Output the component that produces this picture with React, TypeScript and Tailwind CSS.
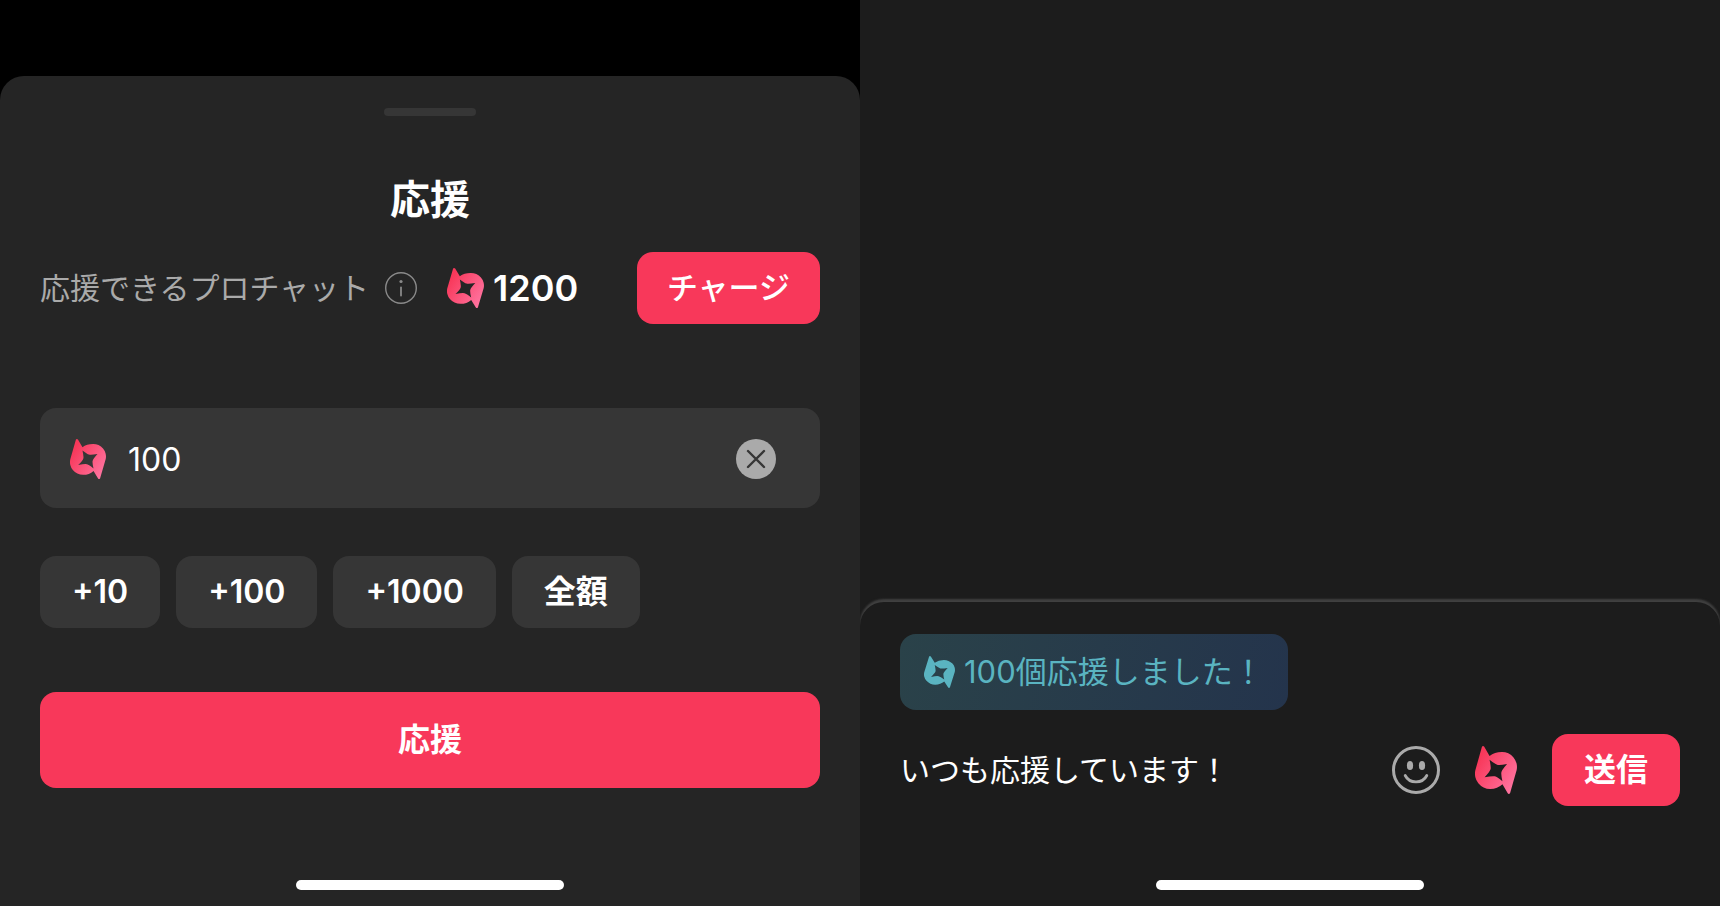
import { useId, useState } from "react";

const BALANCE = 1200;
const STEPS = [10, 100, 1000];

function CoinIcon({ className, flat = false }: { className: string; flat?: boolean }) {
  const id = useId();

  return (
    <svg viewBox="9 0 127 144" preserveAspectRatio="none" className={className} aria-hidden="true">
      <defs>
        <linearGradient id={id} x1="20" y1="40" x2="130" y2="112" gradientUnits="userSpaceOnUse">
          <stop stopColor="#f8385a" />
          <stop offset="1" stopColor="#ff729e" />
        </linearGradient>
      </defs>
      <path
        fill={flat ? "currentColor" : `url(#${id})`}
        fillRule="evenodd"
        d="M30 2Q33 -2 37 2L53 30Q68 18 90 18A45 45 0 0 1 135 72L115 142Q111 146 108 142L92 115Q77 129 55 129A46 46 0 0 1 10 73ZM53 41Q58 64 56 70Q54 77 38 94Q62 89 69 91Q76 93 92 106Q87 84 89 78Q91 71 106 54Q82 58 76 56Q69 54 53 41Z"
      />
    </svg>
  );
}

function InfoIcon() {
  return (
    <svg viewBox="0 0 32 32" className="size-8" fill="none" aria-hidden="true">
      <circle cx="16" cy="16" r="15.3" stroke="currentColor" strokeWidth="1.4" />
      <circle cx="16" cy="9.5" r="1.6" fill="currentColor" />
      <path d="M16 15.5v8" stroke="currentColor" strokeWidth="1.8" strokeLinecap="round" />
    </svg>
  );
}

function ClearIcon() {
  return (
    <svg viewBox="0 0 40 40" className="size-10" aria-hidden="true">
      <circle cx="20" cy="20" r="20" fill="#aaaaaa" />
      <path d="M12 12l16 16M28 12L12 28" stroke="#363636" strokeWidth="2.4" strokeLinecap="round" />
    </svg>
  );
}

function SmileIcon() {
  return (
    <svg viewBox="0 0 48 48" className="size-12" fill="none" aria-hidden="true">
      <circle cx="24" cy="24" r="22.5" stroke="#aaaaaa" strokeWidth="3" />
      <ellipse cx="18" cy="19.5" rx="3.1" ry="4.6" fill="#aaaaaa" />
      <ellipse cx="30" cy="19.5" rx="3.1" ry="4.6" fill="#aaaaaa" />
      <path d="M13.2 29.5C17.5 38 30.5 38 34.8 29.5" stroke="#aaaaaa" strokeWidth="2.8" strokeLinecap="round" />
    </svg>
  );
}

function HomeBar() {
  return <div className="mx-auto mt-auto mb-4 h-2.5 w-[268px] shrink-0 rounded-full bg-white" />;
}

function SupportSheet() {
  const [amount, setAmount] = useState(100);

  return (
    <section className="flex flex-1 flex-col bg-black pt-[76px]">
      <div className="flex flex-1 flex-col rounded-t-3xl bg-[#252525]">
        <div className="mx-auto mt-8 h-2 w-[92px] rounded-full bg-[#363636]" />
        <div className="px-10">
          <h2 className="mt-[54px] text-center text-[40px] leading-[60px] font-bold">応援</h2>

          <div className="mt-[22px] flex items-center">
            <span className="text-[30px] text-[#aaaaaa]">応援できるプロチャット</span>
            <button type="button" aria-label="プロチャットについて" className="ml-4 text-[#8a8a8a]">
              <InfoIcon />
            </button>
            <CoinIcon className="ml-[30px] h-10 w-[37px]" />
            <span className="ml-[9px] text-4xl font-semibold">{BALANCE}</span>
            <button
              type="button"
              className="ml-auto h-[72px] rounded-2xl bg-[#f8385a] px-[30px] text-[31px] font-medium"
            >
              チャージ
            </button>
          </div>

          <label className="mt-[84px] flex h-[100px] items-center rounded-2xl bg-[#363636] pt-0.5 pr-11 pl-[30px]">
            <CoinIcon className="h-10 w-9" />
            <input
              type="text"
              inputMode="numeric"
              aria-label="応援する数"
              value={amount}
              onChange={(e) => setAmount(Number(e.target.value) || 0)}
              className="ml-[22px] min-w-0 flex-1 bg-transparent pt-0.5 text-[32px] outline-none"
            />
            <button type="button" aria-label="クリア" onClick={() => setAmount(0)}>
              <ClearIcon />
            </button>
          </label>

          <div className="mt-12 flex gap-4">
            {STEPS.map((n) => (
              <button
                key={n}
                type="button"
                onClick={() => setAmount(Math.min(amount + n, BALANCE))}
                className="h-[72px] rounded-2xl bg-[#363636] px-8 text-[32px] font-semibold"
              >
                +{n}
              </button>
            ))}
            <button
              type="button"
              onClick={() => setAmount(BALANCE)}
              className="h-[72px] rounded-2xl bg-[#363636] px-8 text-[32px] font-bold"
            >
              全額
            </button>
          </div>

          <button type="button" className="mt-16 h-24 w-full rounded-2xl bg-[#f8385a] text-[32px] font-bold">
            応援
          </button>
        </div>
        <HomeBar />
      </div>
    </section>
  );
}

function ChatPanel() {
  const [message, setMessage] = useState("いつも応援しています！");

  return (
    <section className="flex flex-1 flex-col justify-end overflow-hidden bg-[#1c1c1c]">
      <div className="flex h-[304px] flex-col rounded-t-3xl bg-[#1c1c1c] pt-8 shadow-[0_-3px_2px_#404040]">
        <div className="px-10">
          <div className="flex h-[76px] w-fit items-center rounded-2xl bg-linear-[105deg] from-[#2a4249] to-[#24344c] px-6 text-[31px] text-[#5ab4c1]">
            <CoinIcon flat className="h-8 w-[31px]" />
            <span className="ml-[9px]">100個応援しました！</span>
          </div>

          <div className="mt-6 flex items-center gap-8">
            <input
              type="text"
              aria-label="メッセージ"
              value={message}
              onChange={(e) => setMessage(e.target.value)}
              className="min-w-0 flex-1 bg-transparent text-[30px] outline-none"
            />
            <button type="button" aria-label="絵文字">
              <SmileIcon />
            </button>
            <button type="button" aria-label="応援" className="flex w-12 justify-center">
              <CoinIcon className="h-12 w-[42px]" />
            </button>
            <button type="button" className="h-[72px] rounded-2xl bg-[#f8385a] px-8 text-[32px] font-bold">
              送信
            </button>
          </div>
        </div>
        <HomeBar />
      </div>
    </section>
  );
}

export default function App() {
  return (
    <main lang="ja" className="flex min-h-screen bg-black font-[Inter,'Noto_Sans_CJK_JP',sans-serif] text-white">
      <SupportSheet />
      <ChatPanel />
    </main>
  );
}
